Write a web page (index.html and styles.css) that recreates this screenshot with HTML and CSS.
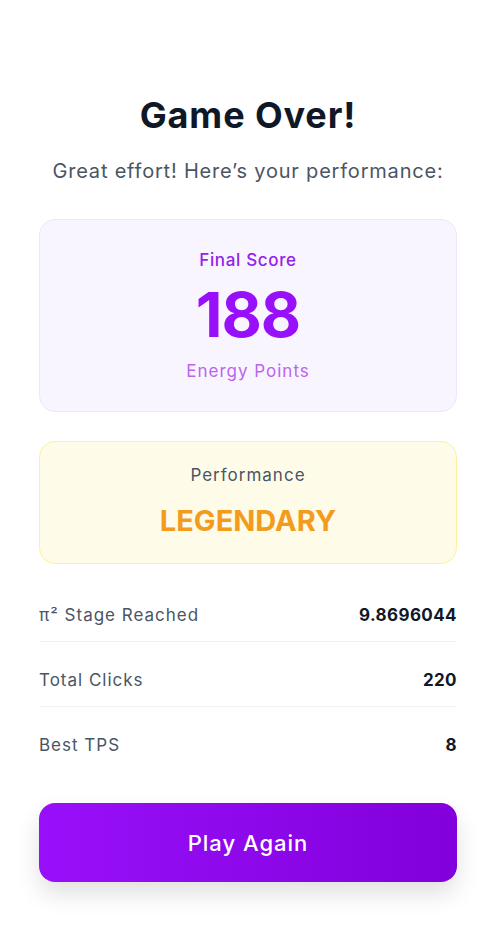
FILE: index.html
```html
<!DOCTYPE html>
<html lang="en">
<head>
    <meta charset="UTF-8">
    <meta name="viewport" content="width=device-width, initial-scale=1.0">
    <title>Game Over</title>
    <link rel="stylesheet" href="styles.css">
</head>
<body>
    <div class="results">
        <h1>Game Over!</h1>
        <p class="subtitle">Great effort! Here’s your performance:</p>

        <div class="score-card">
            <div class="score-label">Final Score</div>
            <div class="score-value">188</div>
            <div class="score-unit">Energy Points</div>
        </div>

        <div class="rank-card">
            <div class="rank-label">Performance</div>
            <div class="rank-value">LEGENDARY</div>
        </div>

        <div class="stats">
            <div class="stat-row">
                <span class="stat-name">π² Stage Reached</span>
                <span class="stat-value">9.8696044</span>
            </div>
            <div class="stat-row">
                <span class="stat-name">Total Clicks</span>
                <span class="stat-value">220</span>
            </div>
            <div class="stat-row">
                <span class="stat-name">Best TPS</span>
                <span class="stat-value">8</span>
            </div>
        </div>

        <button class="play-btn">Play Again</button>
    </div>
</body>
</html>
```

FILE: styles.css
```css
body {
    font-family: Inter, "Noto Sans", sans-serif;
    background: #ffffff;
    color: #101828;
    margin: 0;
    min-height: 100vh;
}

.results {
    padding: 93px 43px 40px 39px;
    display: flex;
    flex-direction: column;
}

h1 {
    text-align: center;
    font-size: 36px;
    line-height: 44px;
    font-weight: 700;
    letter-spacing: 0.9px;
    color: #101828;
    margin: 0;
}

.subtitle {
    text-align: center;
    font-size: 20px;
    line-height: 28px;
    letter-spacing: 0.8px;
    color: #4a5565;
    margin: 20px 0 34px;
}

.score-card {
    background: #f9f5ff;
    border: 1px solid #efe6fb;
    border-radius: 16px;
    padding: 28px 20px;
    text-align: center;
}

.score-label {
    font-size: 17px;
    line-height: 24px;
    font-weight: 500;
    letter-spacing: 0.65px;
    color: #9323e8;
}

.score-value {
    font-size: 62px;
    line-height: 64px;
    font-weight: 700;
    color: #9810fa;
    margin: 11px 0 12px;
    letter-spacing: -1px;
}

.score-unit {
    font-size: 17px;
    line-height: 24px;
    letter-spacing: 1px;
    color: #b965ee;
}

.rank-card {
    background: #fefce8;
    border: 1px solid #fdf1a0;
    border-radius: 16px;
    padding: 21px 20px 24px;
    text-align: center;
    margin-top: 29px;
}

.rank-label {
    font-size: 17px;
    line-height: 24px;
    letter-spacing: 1px;
    color: #4a5565;
}

.rank-value {
    font-size: 29px;
    line-height: 36px;
    font-weight: 700;
    color: #f29b1d;
    margin-top: 16px;
}

.stats {
    margin-top: 25px;
    display: flex;
    flex-direction: column;
    gap: 12px;
}

.stat-row {
    display: flex;
    justify-content: space-between;
    align-items: center;
    padding: 14px 0;
    font-size: 17px;
    line-height: 24px;
    border-bottom: 1px solid #f1f2f4;
}

.stat-row:last-child {
    border-bottom: none;
}

.stat-name {
    color: #4a5565;
    letter-spacing: 1px;
}

.stat-value {
    font-weight: 700;
    letter-spacing: 0.4px;
    color: #101828;
}

.play-btn {
    margin-top: 32px;
    height: 79px;
    border: none;
    border-radius: 16px;
    background: linear-gradient(90deg, #9810fa, #8200db);
    color: #ffffff;
    font-family: inherit;
    font-size: 22px;
    font-weight: 500;
    letter-spacing: 1px;
    box-shadow: 0 12px 24px rgba(0, 0, 0, 0.12);
    cursor: pointer;
}
```
